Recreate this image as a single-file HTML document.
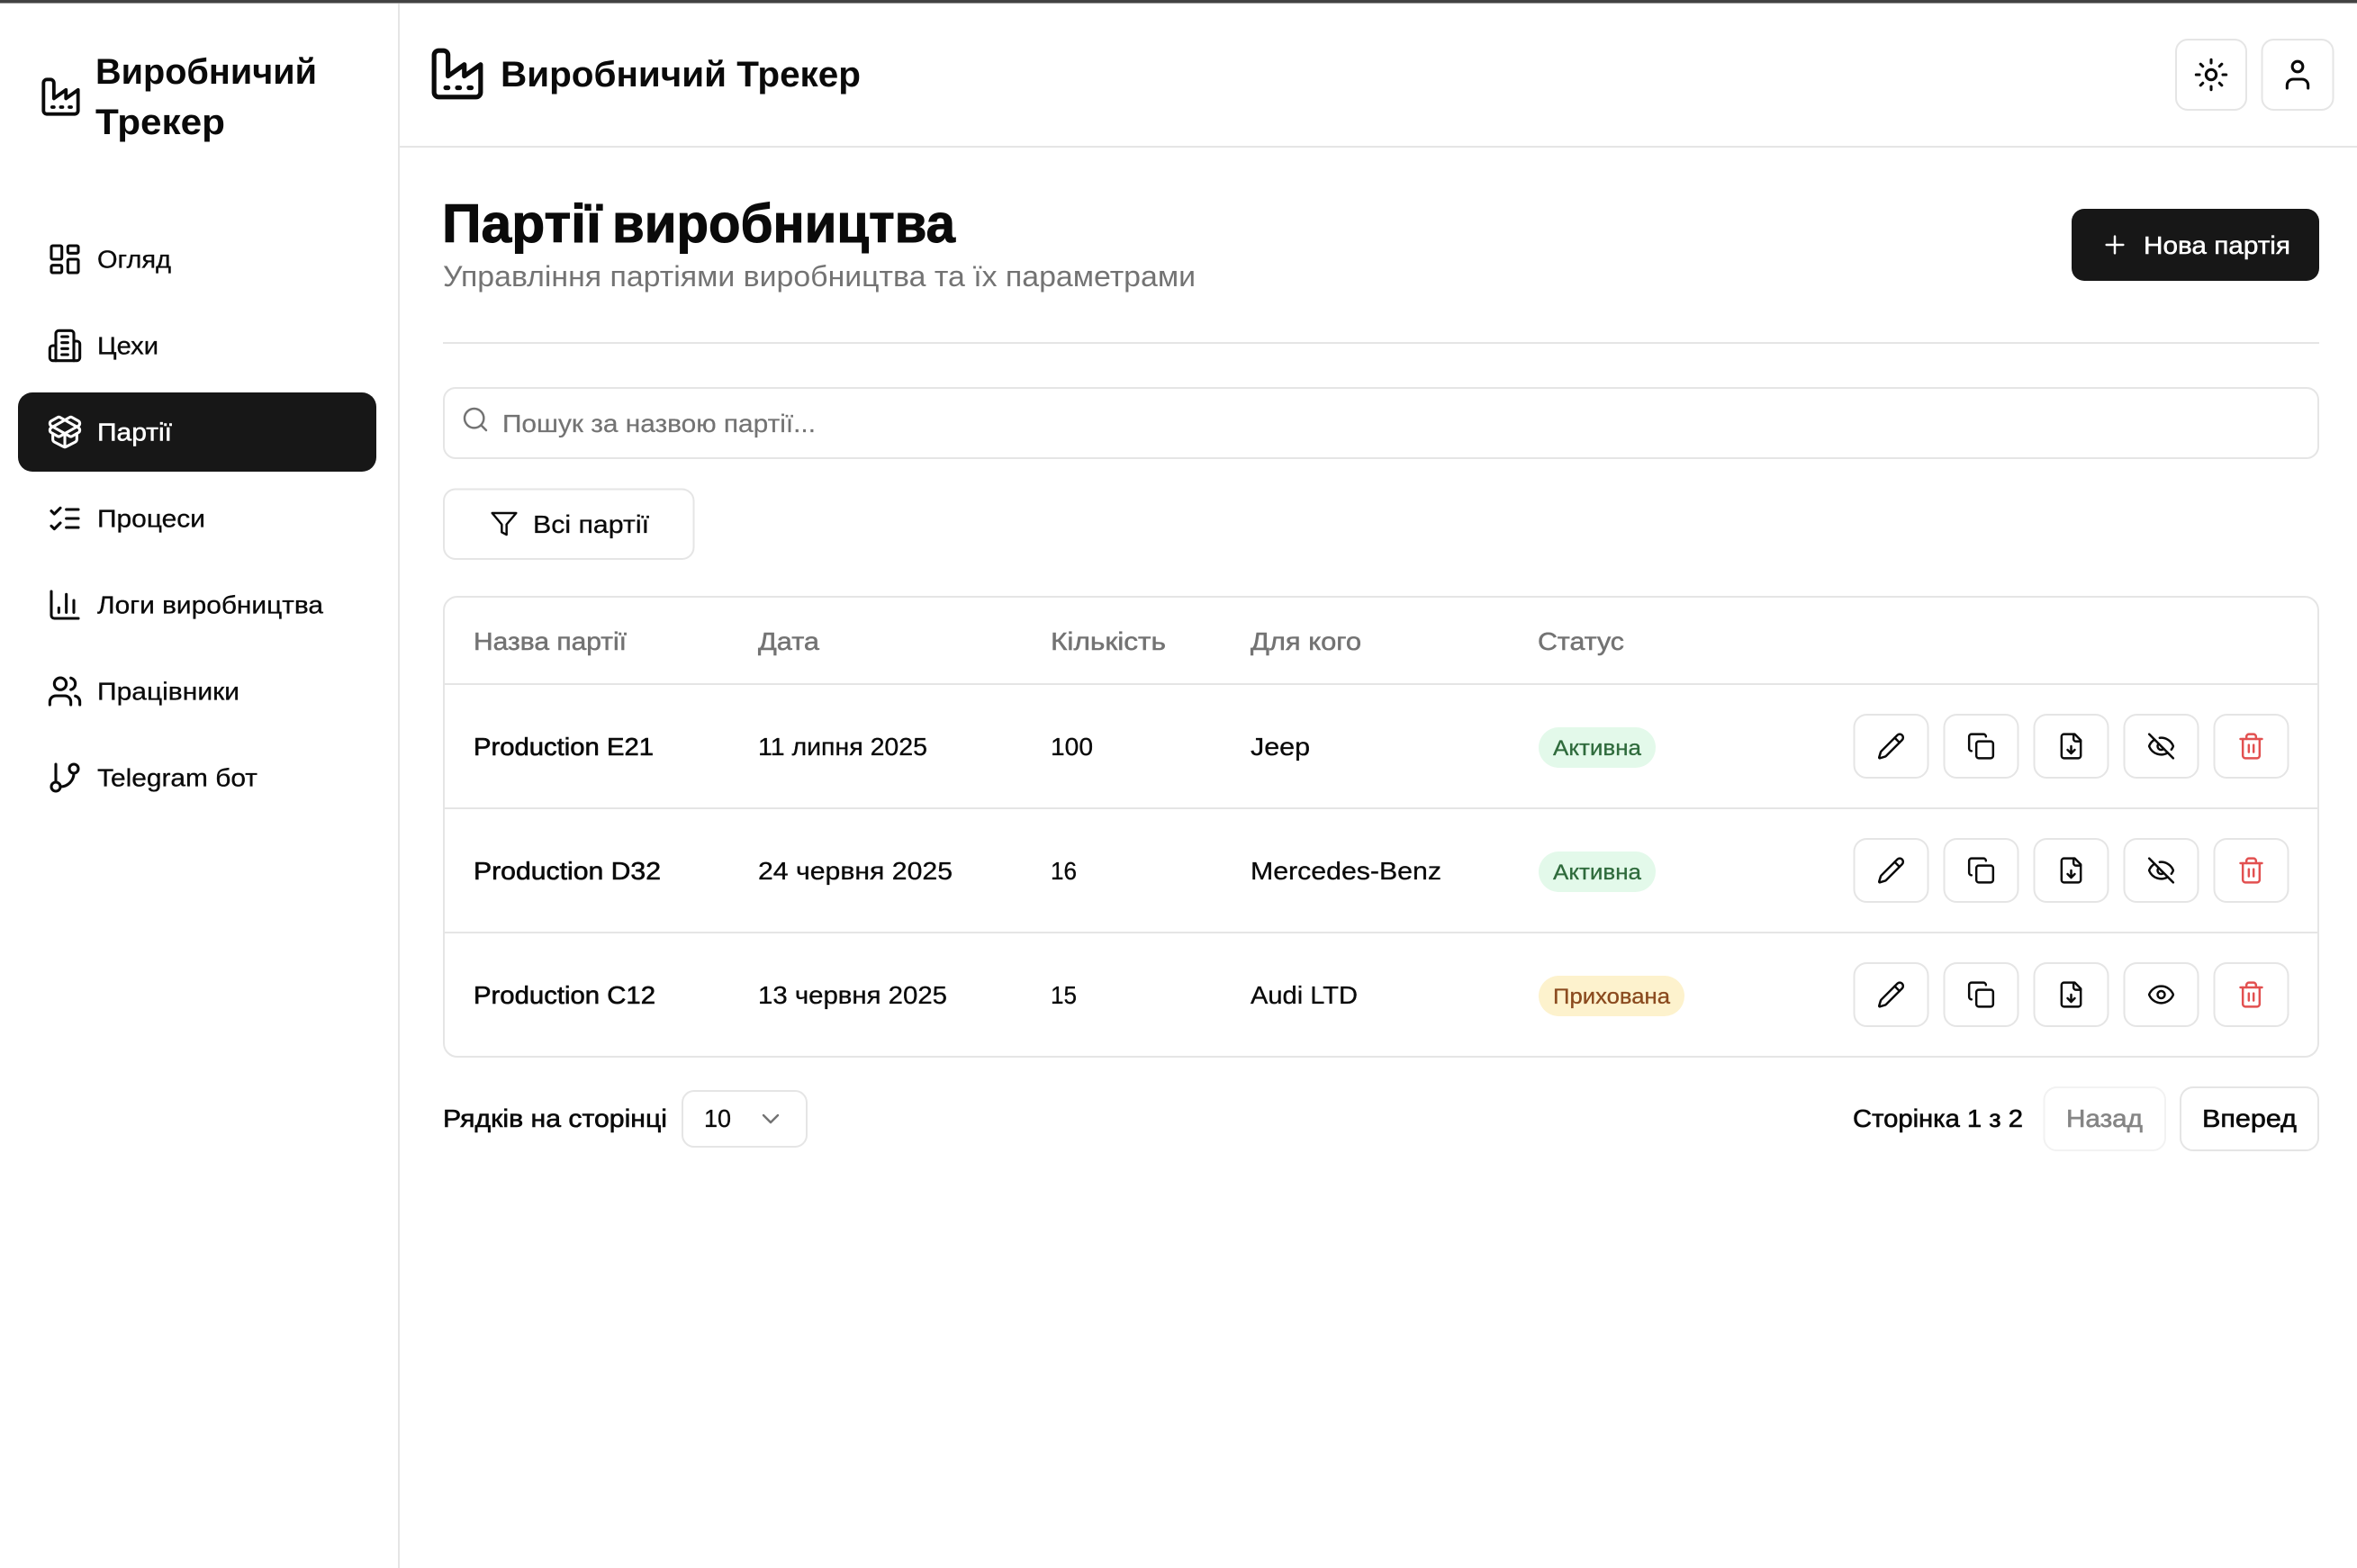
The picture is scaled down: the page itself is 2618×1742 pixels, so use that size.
<!DOCTYPE html>
<html lang="uk">
<head>
<meta charset="utf-8">
<title>Виробничий Трекер</title>
<style>
html,body{margin:0;padding:0;background:#fff;width:2618px;height:1742px;overflow:hidden}
svg{display:block}
text{font-family:"Liberation Sans",Arial,sans-serif;fill:#0a0a0a}
.n{font-size:28px;stroke:#0a0a0a;stroke-width:.3px}
.s{font-size:28px;stroke:#0a0a0a;stroke-width:.6px}
.h{font-size:28px;fill:#737373;stroke:#737373;stroke-width:.5px}
.p{font-size:28px;fill:#737373;stroke:#737373;stroke-width:.2px}
.w{font-size:28px;fill:#fff;stroke:#fff;stroke-width:.5px}
.ttl{font-size:40px;font-weight:700}
.big{font-size:60px;font-weight:700;stroke:#0a0a0a;stroke-width:1px}
.box{fill:#fff;stroke:#e5e5e5;stroke-width:2}
.i{fill:none;stroke:currentColor;stroke-width:var(--sw,1.85);stroke-linecap:round;stroke-linejoin:round}
.logo{--sw:2}
</style>
</head>
<body>
<svg xmlns="http://www.w3.org/2000/svg" width="2618" height="1742" viewBox="0 0 2618 1742">
<defs>
<symbol id="factory" viewBox="0 0 24 24"><g class="i"><path d="M2 20a2 2 0 0 0 2 2h16a2 2 0 0 0 2-2V8l-7 5V8l-7 5V4a2 2 0 0 0-2-2H4a2 2 0 0 0-2 2Z"/><path d="M17 18h1"/><path d="M12 18h1"/><path d="M7 18h1"/></g></symbol>
<symbol id="dash" viewBox="0 0 24 24"><g class="i"><rect width="7" height="9" x="3" y="3" rx="1"/><rect width="7" height="5" x="14" y="3" rx="1"/><rect width="7" height="9" x="14" y="12" rx="1"/><rect width="7" height="5" x="3" y="16" rx="1"/></g></symbol>
<symbol id="bld" viewBox="0 0 24 24"><g class="i"><path d="M6 22V4a2 2 0 0 1 2-2h8a2 2 0 0 1 2 2v18Z"/><path d="M6 12H4a2 2 0 0 0-2 2v6a2 2 0 0 0 2 2h2"/><path d="M18 9h2a2 2 0 0 1 2 2v9a2 2 0 0 1-2 2h-2"/><path d="M10 6h4"/><path d="M10 10h4"/><path d="M10 14h4"/><path d="M10 18h4"/></g></symbol>
<symbol id="pkg" viewBox="0 0 24 24"><g class="i"><path d="M12 22v-9"/><path d="M15.17 2.21a1.67 1.67 0 0 1 1.63 0L21 4.57a1.93 1.93 0 0 1 0 3.36L8.82 14.79a1.655 1.655 0 0 1-1.64 0L3 12.43a1.93 1.93 0 0 1 0-3.36z"/><path d="M20 13v3.87a2.06 2.06 0 0 1-1.11 1.83l-6 3.08a1.93 1.93 0 0 1-1.78 0l-6-3.08A2.06 2.06 0 0 1 4 16.87V13"/><path d="M21 12.43a1.93 1.93 0 0 0 0-3.36L8.83 2.2a1.64 1.64 0 0 0-1.63 0L3 4.57a1.93 1.93 0 0 0 0 3.36l12.18 6.86a1.636 1.636 0 0 0 1.63 0z"/></g></symbol>
<symbol id="chk" viewBox="0 0 24 24"><g class="i"><path d="m3 17 2 2 4-4"/><path d="m3 7 2 2 4-4"/><path d="M13 6h8"/><path d="M13 12h8"/><path d="M13 18h8"/></g></symbol>
<symbol id="bar" viewBox="0 0 24 24"><g class="i"><path d="M3 3v16a2 2 0 0 0 2 2h16"/><path d="M18 17V9"/><path d="M13 17V5"/><path d="M8 17v-3"/></g></symbol>
<symbol id="users" viewBox="0 0 24 24"><g class="i"><path d="M16 21v-2a4 4 0 0 0-4-4H6a4 4 0 0 0-4 4v2"/><circle cx="9" cy="7" r="4"/><path d="M22 21v-2a4 4 0 0 0-3-3.87"/><path d="M16 3.13a4 4 0 0 1 0 7.75"/></g></symbol>
<symbol id="git" viewBox="0 0 24 24"><g class="i"><line x1="6" x2="6" y1="3" y2="15"/><circle cx="18" cy="6" r="3"/><circle cx="6" cy="18" r="3"/><path d="M18 9a9 9 0 0 1-9 9"/></g></symbol>
<symbol id="pen" viewBox="0 0 24 24"><g class="i"><path d="M21.174 6.812a1 1 0 0 0-3.986-3.987L3.842 16.174a2 2 0 0 0-.5.83l-1.321 4.352a.5.5 0 0 0 .623.622l4.353-1.32a2 2 0 0 0 .83-.497z"/><path d="m15 5 4 4"/></g></symbol>
<symbol id="copy" viewBox="0 0 24 24"><g class="i"><rect width="14" height="14" x="8" y="8" rx="2" ry="2"/><path d="M4 16c-1.1 0-2-.9-2-2V4c0-1.1.9-2 2-2h10c1.1 0 2 .9 2 2"/></g></symbol>
<symbol id="file" viewBox="0 0 24 24"><g class="i"><path d="M15 2H6a2 2 0 0 0-2 2v16a2 2 0 0 0 2 2h12a2 2 0 0 0 2-2V7Z"/><path d="M14 2v4a2 2 0 0 0 2 2h4"/><path d="M12 18v-6"/><path d="m9 15 3 3 3-3"/></g></symbol>
<symbol id="off" viewBox="0 0 24 24"><g class="i"><path d="M10.733 5.076a10.744 10.744 0 0 1 11.205 6.575 1 1 0 0 1 0 .696 10.747 10.747 0 0 1-1.444 2.49"/><path d="M14.084 14.158a3 3 0 0 1-4.242-4.242"/><path d="M17.479 17.499a10.75 10.75 0 0 1-15.417-5.151 1 1 0 0 1 0-.696 10.75 10.75 0 0 1 4.446-5.143"/><path d="m2 2 20 20"/></g></symbol>
<symbol id="eye" viewBox="0 0 24 24"><g class="i"><path d="M2.062 12.348a1 1 0 0 1 0-.696 10.75 10.75 0 0 1 19.876 0 1 1 0 0 1 0 .696 10.75 10.75 0 0 1-19.876 0"/><circle cx="12" cy="12" r="3"/></g></symbol>
<symbol id="trash" viewBox="0 0 24 24"><g class="i"><path d="M3 6h18"/><path d="M19 6v14c0 1-1 2-2 2H7c-1 0-2-1-2-2V6"/><path d="M8 6V4c0-1 1-2 2-2h4c1 0 2 1 2 2v2"/><line x1="10" x2="10" y1="11" y2="17"/><line x1="14" x2="14" y1="11" y2="17"/></g></symbol>
<symbol id="sun" viewBox="0 0 24 24"><g class="i"><circle cx="12" cy="12" r="3.4"/><path d="M12 2v2.2"/><path d="M12 19.8V22"/><path d="m4.93 4.93 1.5 1.5"/><path d="m17.57 17.57 1.5 1.5"/><path d="M2 12h2.2"/><path d="M19.8 12H22"/><path d="m6.43 17.57-1.5 1.5"/><path d="m19.07 4.93-1.5 1.5"/></g></symbol>
<symbol id="user" viewBox="0 0 24 24"><g class="i"><path d="M19 21v-2a4 4 0 0 0-4-4H9a4 4 0 0 0-4 4v2"/><circle cx="12" cy="6.6" r="3.5"/></g></symbol>
<symbol id="plus" viewBox="0 0 24 24"><g class="i"><path d="M5 12h14"/><path d="M12 5v14"/></g></symbol>
<symbol id="search" viewBox="0 0 24 24"><g class="i"><circle cx="11" cy="11" r="8"/><path d="m21 21-4.3-4.3"/></g></symbol>
<symbol id="funnel" viewBox="0 0 24 24"><g class="i"><polygon points="22 3 2 3 10 12.46 10 19 14 21 14 12.46 22 3"/></g></symbol>
<symbol id="chev" viewBox="0 0 24 24"><g class="i"><path d="m6 9 6 6 6-6"/></g></symbol>
</defs>

<rect width="2618" height="1742" fill="#fff"/>
<rect width="2618" height="3" fill="#424242"/>
<rect y="3" width="2618" height="1" fill="#a0a0a0"/>

<!-- sidebar -->
<rect x="442" y="4" width="2" height="1738" fill="#e5e5e5"/>
<use class="logo" href="#factory" x="44.5" y="84.5" width="46" height="46" color="#0a0a0a"/>
<text class="ttl" x="106" y="93" textLength="246" lengthAdjust="spacingAndGlyphs">Виробничий</text>
<text class="ttl" x="106" y="149" textLength="144" lengthAdjust="spacingAndGlyphs">Трекер</text>

<use href="#dash" x="52" y="268" width="40" height="40" color="#0a0a0a"/>
<text class="n" x="108" y="297.5" textLength="82" lengthAdjust="spacingAndGlyphs">Огляд</text>
<use href="#bld" x="52" y="364" width="40" height="40" color="#0a0a0a"/>
<text class="n" x="108" y="393.5" textLength="68" lengthAdjust="spacingAndGlyphs">Цехи</text>
<rect x="20" y="436" width="398" height="88" rx="16" fill="#171717"/>
<use href="#pkg" x="52" y="460" width="40" height="40" color="#fff"/>
<text class="w" x="108" y="489.5" textLength="83" lengthAdjust="spacingAndGlyphs">Партії</text>
<use href="#chk" x="52" y="556" width="40" height="40" color="#0a0a0a"/>
<text class="n" x="108" y="585.5" textLength="120" lengthAdjust="spacingAndGlyphs">Процеси</text>
<use href="#bar" x="52" y="652" width="40" height="40" color="#0a0a0a"/>
<text class="n" x="108" y="681.5" textLength="251" lengthAdjust="spacingAndGlyphs">Логи виробництва</text>
<use href="#users" x="52" y="748" width="40" height="40" color="#0a0a0a"/>
<text class="n" x="108" y="777.5" textLength="158" lengthAdjust="spacingAndGlyphs">Працівники</text>
<use href="#git" x="52" y="844" width="40" height="40" color="#0a0a0a"/>
<text class="n" x="108" y="873.5" textLength="178" lengthAdjust="spacingAndGlyphs">Telegram бот</text>

<!-- header -->
<rect x="444" y="162" width="2174" height="2" fill="#e5e5e5"/>
<use class="logo" href="#factory" x="477" y="51" width="62" height="62" color="#0a0a0a"/>
<text class="ttl" x="556" y="96" textLength="400" lengthAdjust="spacingAndGlyphs">Виробничий Трекер</text>
<rect class="box" x="2417" y="44" width="78" height="78" rx="13"/>
<use href="#sun" x="2436" y="63" width="40" height="40" color="#0a0a0a"/>
<rect class="box" x="2512.5" y="44" width="79" height="78" rx="13"/>
<use href="#user" x="2532" y="63" width="40" height="40" color="#0a0a0a"/>

<!-- title -->
<text class="big" x="491" y="269" textLength="177" lengthAdjust="spacingAndGlyphs">Партії</text>
<text class="big" x="680" y="269" textLength="381" lengthAdjust="spacingAndGlyphs">виробництва</text>
<text x="492" y="318" font-size="32" style="fill:#737373" textLength="836" lengthAdjust="spacingAndGlyphs">Управління партіями виробництва та їх параметрами</text>
<rect x="2301" y="232" width="275" height="80" rx="14" fill="#171717"/>
<use href="#plus" x="2333" y="256" width="32" height="32" color="#fff"/>
<text class="w" x="2381" y="282" textLength="163" lengthAdjust="spacingAndGlyphs">Нова партія</text>
<rect x="492" y="380" width="2084" height="2" fill="#e5e5e5"/>

<!-- search -->
<rect class="box" x="493" y="431" width="2082" height="78" rx="13"/>
<use href="#search" x="512" y="450" width="32" height="32" color="#737373"/>
<text class="p" x="558" y="480" textLength="348" lengthAdjust="spacingAndGlyphs">Пошук за назвою партії...</text>

<!-- filter -->
<rect class="box" x="493" y="543.5" width="277.5" height="77.5" rx="13"/>
<use href="#funnel" x="544" y="566" width="32" height="32" color="#0a0a0a"/>
<text class="n" x="592" y="592" textLength="129" lengthAdjust="spacingAndGlyphs">Всі партії</text>

<!-- table -->
<rect class="box" x="493" y="663" width="2082" height="511" rx="15"/>
<rect x="494" y="759" width="2080" height="2" fill="#e5e5e5"/>
<rect x="494" y="897" width="2080" height="2" fill="#e5e5e5"/>
<rect x="494" y="1035" width="2080" height="2" fill="#e5e5e5"/>

<text class="h" x="526" y="722" textLength="170" lengthAdjust="spacingAndGlyphs">Назва партії</text>
<text class="h" x="842" y="722" textLength="68" lengthAdjust="spacingAndGlyphs">Дата</text>
<text class="h" x="1167" y="722" textLength="128" lengthAdjust="spacingAndGlyphs">Кількість</text>
<text class="h" x="1389" y="722" textLength="123" lengthAdjust="spacingAndGlyphs">Для кого</text>
<text class="h" x="1708" y="722" textLength="96" lengthAdjust="spacingAndGlyphs">Статус</text>

<!-- row 1 -->
<text class="s" x="526" y="839" textLength="200" lengthAdjust="spacingAndGlyphs">Production E21</text>
<text class="n" x="842" y="839" textLength="188" lengthAdjust="spacingAndGlyphs">11 липня 2025</text>
<text class="n" x="1167" y="839" textLength="47" lengthAdjust="spacingAndGlyphs">100</text>
<text class="n" x="1389" y="839" textLength="66" lengthAdjust="spacingAndGlyphs">Jeep</text>
<rect x="1709" y="808" width="130" height="45" rx="22.5" fill="#e3f9ea"/>
<text x="1725" y="839" font-size="24" style="fill:#2f6b3c;stroke:#2f6b3c;stroke-width:.3px" textLength="98" lengthAdjust="spacingAndGlyphs">Активна</text>

<!-- row 2 -->
<text class="s" x="526" y="977" textLength="208" lengthAdjust="spacingAndGlyphs">Production D32</text>
<text class="n" x="842" y="977" textLength="216" lengthAdjust="spacingAndGlyphs">24 червня 2025</text>
<text class="n" x="1167" y="977" textLength="29" lengthAdjust="spacingAndGlyphs">16</text>
<text class="n" x="1389" y="977" textLength="212" lengthAdjust="spacingAndGlyphs">Mercedes-Benz</text>
<rect x="1709" y="946" width="130" height="45" rx="22.5" fill="#e3f9ea"/>
<text x="1725" y="977" font-size="24" style="fill:#2f6b3c;stroke:#2f6b3c;stroke-width:.3px" textLength="98" lengthAdjust="spacingAndGlyphs">Активна</text>

<!-- row 3 -->
<text class="s" x="526" y="1115" textLength="202" lengthAdjust="spacingAndGlyphs">Production C12</text>
<text class="n" x="842" y="1115" textLength="210" lengthAdjust="spacingAndGlyphs">13 червня 2025</text>
<text class="n" x="1167" y="1115" textLength="29" lengthAdjust="spacingAndGlyphs">15</text>
<text class="n" x="1389" y="1115" textLength="119" lengthAdjust="spacingAndGlyphs">Audi LTD</text>
<rect x="1709" y="1084" width="162" height="45" rx="22.5" fill="#fdf2cd"/>
<text x="1725" y="1115" font-size="24" style="fill:#8a4a1e;stroke:#8a4a1e;stroke-width:.3px" textLength="130" lengthAdjust="spacingAndGlyphs">Прихована</text>

<!-- actions row 1 -->
<rect class="box" x="2059.5" y="794" width="82" height="70" rx="14"/><use href="#pen" x="2084.5" y="813" width="32" height="32" color="#0a0a0a"/>
<rect class="box" x="2159.5" y="794" width="82" height="70" rx="14"/><use href="#copy" x="2184.5" y="813" width="32" height="32" color="#0a0a0a"/>
<rect class="box" x="2259.5" y="794" width="82" height="70" rx="14"/><use href="#file" x="2284.5" y="813" width="32" height="32" color="#0a0a0a"/>
<rect class="box" x="2359.5" y="794" width="82" height="70" rx="14"/><use href="#off" x="2384.5" y="813" width="32" height="32" color="#0a0a0a"/>
<rect class="box" x="2459.5" y="794" width="82" height="70" rx="14"/><use href="#trash" x="2484.5" y="813" width="32" height="32" color="#e25050"/>
<!-- actions row 2 -->
<rect class="box" x="2059.5" y="932" width="82" height="70" rx="14"/><use href="#pen" x="2084.5" y="951" width="32" height="32" color="#0a0a0a"/>
<rect class="box" x="2159.5" y="932" width="82" height="70" rx="14"/><use href="#copy" x="2184.5" y="951" width="32" height="32" color="#0a0a0a"/>
<rect class="box" x="2259.5" y="932" width="82" height="70" rx="14"/><use href="#file" x="2284.5" y="951" width="32" height="32" color="#0a0a0a"/>
<rect class="box" x="2359.5" y="932" width="82" height="70" rx="14"/><use href="#off" x="2384.5" y="951" width="32" height="32" color="#0a0a0a"/>
<rect class="box" x="2459.5" y="932" width="82" height="70" rx="14"/><use href="#trash" x="2484.5" y="951" width="32" height="32" color="#e25050"/>
<!-- actions row 3 -->
<rect class="box" x="2059.5" y="1070" width="82" height="70" rx="14"/><use href="#pen" x="2084.5" y="1089" width="32" height="32" color="#0a0a0a"/>
<rect class="box" x="2159.5" y="1070" width="82" height="70" rx="14"/><use href="#copy" x="2184.5" y="1089" width="32" height="32" color="#0a0a0a"/>
<rect class="box" x="2259.5" y="1070" width="82" height="70" rx="14"/><use href="#file" x="2284.5" y="1089" width="32" height="32" color="#0a0a0a"/>
<rect class="box" x="2359.5" y="1070" width="82" height="70" rx="14"/><use href="#eye" x="2384.5" y="1089" width="32" height="32" color="#0a0a0a"/>
<rect class="box" x="2459.5" y="1070" width="82" height="70" rx="14"/><use href="#trash" x="2484.5" y="1089" width="32" height="32" color="#e25050"/>

<!-- pagination -->
<text class="s" x="492" y="1252" textLength="249" lengthAdjust="spacingAndGlyphs">Рядків на сторінці</text>
<rect class="box" x="758" y="1212" width="138" height="62" rx="13"/>
<text class="n" x="782" y="1252" textLength="30" lengthAdjust="spacingAndGlyphs">10</text>
<use href="#chev" x="840" y="1227" width="32" height="32" color="#737373"/>
<text class="s" x="2058" y="1252" textLength="189" lengthAdjust="spacingAndGlyphs">Сторінка 1 з 2</text>
<rect x="2270.5" y="1208" width="134.5" height="70" rx="14" fill="#fff" stroke="#f2f2f2" stroke-width="2"/>
<text x="2295" y="1252" font-size="28" style="fill:#858585;stroke:#858585;stroke-width:.6px" textLength="85" lengthAdjust="spacingAndGlyphs">Назад</text>
<rect class="box" x="2422" y="1208" width="153" height="70" rx="14"/>
<text class="s" x="2446" y="1252" textLength="105" lengthAdjust="spacingAndGlyphs">Вперед</text>
</svg>
</body>
</html>
